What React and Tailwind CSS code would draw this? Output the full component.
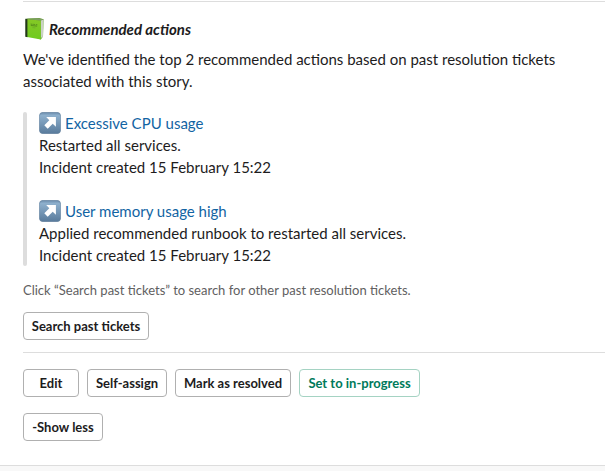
function BookIcon() {
  return (
    <svg width="22" height="22" viewBox="0 0 22 22" className="block shrink-0">
      <defs>
        <linearGradient id="cover" x1="0" y1="0" x2="0" y2="1">
          <stop offset="0" stopColor="#85c826" />
          <stop offset="1" stopColor="#6fcb1e" />
        </linearGradient>
      </defs>
      <path d="M3.4 0.8 L16 0 L20.6 1.2 L20 18.4 L17.8 21.6 L14 20Z" fill="#5b9f22" />
      <path d="M17.6 2.6 L20.5 1.4 L19.9 18.3 L17.6 20.4Z" fill="#d3d9ce" />
      <path d="M19.1 2.2 V19" stroke="#b3bbb0" strokeWidth="0.5" />
      <path d="M2.8 0.9 L17.8 2.5 L17.8 21.6 L2.8 18.8Z" fill="url(#cover)" />
      <path d="M3 0.9 L17.8 2.5 L20.6 1.2 L15 0.2 L5 0.4Z" fill="#7f9d64" />
      <path d="M2.3 0.8 L4.4 1 V19.2 L2.3 18.7Z" fill="#23371c" />
      <path d="M7.6 6.1 L9.6 6.3 M10.2 6.3 L11.9 6.5 M12.8 6.6 L14.3 6.7 M7.8 7.5 L14.2 8.1" stroke="#558b1c" strokeWidth="0.9" />
      <path d="M9.4 9.6 L12.6 9.9" stroke="#6ba929" strokeWidth="0.7" />
    </svg>
  );
}

function ArrowIcon() {
  return (
    <svg width="22" height="22" viewBox="0 0 22 22" className="block shrink-0">
      <defs>
        <linearGradient id="tile" x1="0" y1="0" x2="0" y2="1">
          <stop offset="0" stopColor="#6788a8" />
          <stop offset="0.14" stopColor="#8eb0cd" />
          <stop offset="1" stopColor="#587a9b" />
        </linearGradient>
      </defs>
      <rect x="0.3" y="0.3" width="21.4" height="21.4" rx="4" fill="url(#tile)" stroke="#617f9c" strokeWidth="0.6" />
      <path d="M7.2 5.1 H16.9 V14.8 L13.7 11.7 L8.7 16.7 L5.3 13.3 L10.3 8.3Z" fill="#fff" />
    </svg>
  );
}

function Button({ children, className = "" }) {
  return (
    <button
      className={`flex h-7 items-center justify-center whitespace-nowrap rounded border text-[13px] font-bold ${className}`}
    >
      {children}
    </button>
  );
}

function Ticket({ title, detail }) {
  return (
    <div>
      <div className="flex h-[22px] items-center gap-1">
        <ArrowIcon />
        <a className="text-[#1264a3]">{title}</a>
      </div>
      <p>{detail}</p>
      <p>Incident created 15 February 15:22</p>
    </div>
  );
}

export default function App() {
  return (
    <div className="flex h-[471px] w-[605px] flex-col overflow-hidden bg-white pt-px font-['Lato','Liberation_Sans',sans-serif] text-[15px] leading-[22px] text-[#1d1c1d]">
      <main className="flex h-[464px] flex-col pl-[23px]">
        <hr className="border-[#dddddd]" />
        <h2 className="mt-4 flex h-[22px] items-center gap-1 font-bold italic">
          <BookIcon />
          <span>Recommended actions</span>
        </h2>
        <p className="mt-2 w-[560px]">
          We've identified the top 2 recommended actions based on past resolution tickets
          <br />
          associated with this story.
        </p>
        <section className="mt-5 flex h-[154px] gap-3">
          <div className="w-1 rounded-lg bg-[#dddddd]" />
          <div className="flex flex-col gap-[22px]">
            <Ticket title="Excessive CPU usage" detail="Restarted all services." />
            <Ticket
              title="User memory usage high"
              detail="Applied recommended runbook to restarted all services."
            />
          </div>
        </section>
        <p className="mt-[13px] text-[13px] text-[#616061]">
          Click “Search past tickets” to search for other past resolution tickets.
        </p>
        <Button className="mt-[11px] w-[126px] border-[#b0b0b0]">Search past tickets</Button>
        <hr className="mt-3 border-[#dddddd]" />
        <div className="mt-4 flex gap-2">
          <Button className="w-14 border-[#b0b0b0]">Edit</Button>
          <Button className="w-20 border-[#b0b0b0]">Self-assign</Button>
          <Button className="w-[116px] border-[#b0b0b0]">Mark as resolved</Button>
          <Button className="w-[121px] border-[#a5d3c3] text-[#007a5a]">Set to in-progress</Button>
        </div>
        <Button className="mt-4 w-20 border-[#b0b0b0]">-Show less</Button>
      </main>
      <footer className="h-1.5 border-t border-[#dddddd] bg-[#f8f8f8]" />
    </div>
  );
}
